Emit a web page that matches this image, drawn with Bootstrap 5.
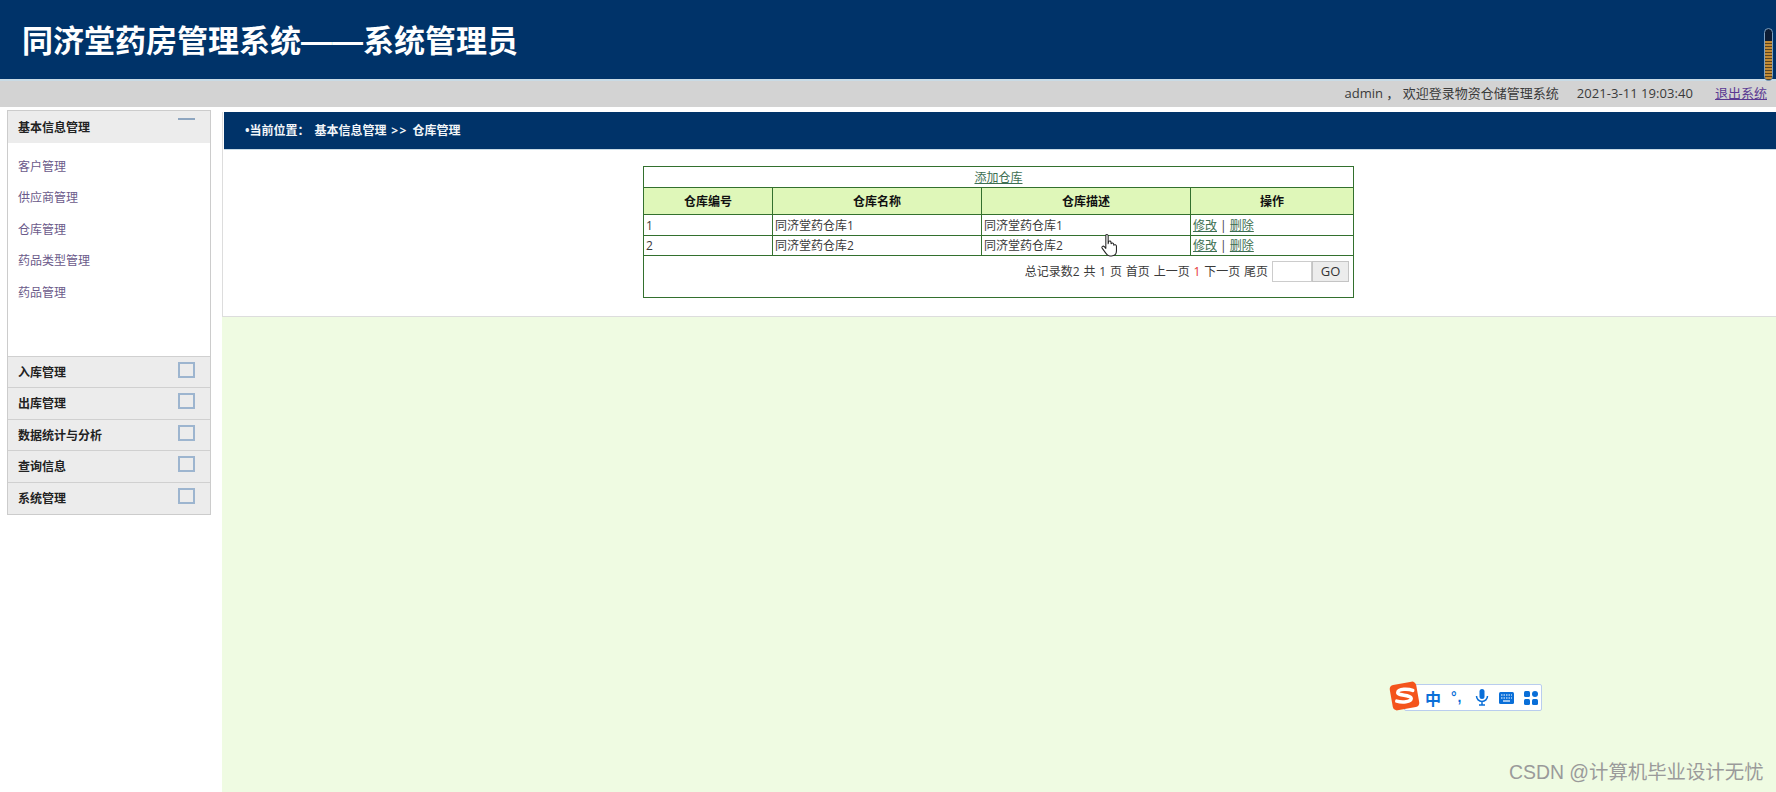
<!DOCTYPE html>
<html lang="zh-CN">
<head>
<meta charset="utf-8">
<title>同济堂药房管理系统</title>
<link href="https://cdn.jsdelivr.net/npm/bootstrap@5.3.0/dist/css/bootstrap.min.css" rel="stylesheet">
<style>
html,body{height:792px;overflow:hidden;background:#fff}
body{font:12px/1.2 "Open Sans","Noto Sans CJK SC",sans-serif;color:#3a3a3a;position:relative}
.top-head{height:81px;background:#003369;border-bottom:2px solid #c9dbe6;padding:25px 0 0 22px}
.top-head h1{margin:0;font:700 31px/34px "Liberation Sans","Noto Sans CJK SC",sans-serif;color:#fff}
.info-bar{height:26px;background:#d3d3d3;font-size:13px;padding-right:9px;gap:18px}
.info-bar a{color:#5b3a92;font-size:13px;margin-left:4px}
.date-txt{letter-spacing:.06px}
.page-body{height:685px}
.side-col{width:222px;padding:3px 0 0 7px;flex:none}
.side-box{width:204px;border:1px solid #ccc}
.side-head{height:31.6px;background:#ececec;padding:0 0 0 10px;font-weight:700;color:#222;font-family:"Noto Sans CJK SC",sans-serif}
.side-head + .side-head,.side-list + .side-head{border-top:1px solid #d0d0d0}
.minus-ico{width:17px;height:2px;background:#8ea6c0;margin:7px 15px 0 0}
.box-ico{width:17px;height:16px;border:2px solid #9db5cf;margin:5px 15px 0 0}
.side-list{height:213px;padding-top:8px;margin:0}
.side-list a{display:block;line-height:31.6px;padding-left:10px;color:#6b5a8a;text-decoration:none}
.main-col{background:#effbe2;min-width:0}
.white-gap{height:5px;background:#fff}
.main-panel{height:205px;background:#fff;border-left:1px solid #ddd;border-bottom:1px solid #ddd;padding-left:1px}
.crumb{height:35px;background:#003369;border-bottom:1px solid #c9dbe6;color:#f2f5f8;font-weight:700;padding:2px 0 0 21px;gap:5px;box-sizing:content-box}
.crumb-sep{letter-spacing:1.5px}
.crumb-wrap{padding:16px 3px 0 0}
.stock-table{width:710px;margin:0 auto;table-layout:fixed;border-collapse:collapse;border:1px solid #33702e;font-size:12px;line-height:16px}
.stock-table td,.stock-table th{border:1px solid #33702e;padding:2px 2px 0;color:#3a3a3a;font-weight:400}
.stock-table th{background:#dff7b9;font-weight:700;text-align:center;color:#111;height:27px;padding:0 2px;font-family:"Noto Sans CJK SC",sans-serif}
.stock-table a{color:#3d6f52}
.row-line td{height:20.5px}
.add-line td{height:21px;text-align:center}
.stock-table .pager-line td{height:42px;vertical-align:top;padding:5px 4px 0 0;word-spacing:.7px}
.pager-input{width:40px;height:21px;border:1px solid #ccc;background:#fff;margin-left:4px;display:block}
.pager-go{width:37px;height:21px;border:1px solid #c4c4c4;background:#ececec;color:#333;font-size:13px;padding:0;line-height:19px;margin:0}
.stock-table .red-num{color:#e53935}
.grip{position:absolute;left:1764px;top:28px;width:9px;height:53px;border:1px solid #7d9fbf;border-radius:5px;background:#0d1c33;overflow:hidden}
.grip i{display:block;margin-top:12px;height:40px;background:repeating-linear-gradient(#c08a35 0 2px,#5b4420 2px 3px)}
.ime-bar{position:absolute;left:1404px;top:684px;width:138px;height:27px;background:#fff;border:1px solid #b9cdee;border-radius:2px;padding-left:20px;gap:10px;color:#0a6fd8}
.ime-zh{font:700 16px/1 "Noto Sans CJK SC",sans-serif}
.ime-pt{font:700 14px/1 "Liberation Sans",sans-serif;width:14px;letter-spacing:1px;margin-top:-2px}
.ime-logo{position:absolute;left:1388px;top:680px}
.mark-text{position:absolute;left:1509px;top:759px;font:19.4px/26px "Liberation Sans","Noto Sans CJK SC",sans-serif;color:#9a9a9a;white-space:nowrap}
.hand{position:absolute;left:1100px;top:233px}
</style>
</head>
<body>
<header class="top-head"><h1>同济堂药房管理系统——系统管理员</h1></header>
<div class="info-bar d-flex align-items-center justify-content-end">
  <span>admin ， 欢迎登录物资仓储管理系统</span><span class="date-txt">2021-3-11 19:03:40</span><a href="#">退出系统</a>
</div>
<div class="page-body d-flex">
  <aside class="side-col">
    <div class="side-box">
      <div class="side-head d-flex justify-content-between align-items-center"><span>基本信息管理</span><i class="minus-ico align-self-start"></i></div>
      <nav class="side-list">
        <a href="#">客户管理</a><a href="#">供应商管理</a><a href="#">仓库管理</a><a href="#">药品类型管理</a><a href="#">药品管理</a>
      </nav>
      <div class="side-head d-flex justify-content-between align-items-center"><span>入库管理</span><i class="box-ico align-self-start"></i></div>
      <div class="side-head d-flex justify-content-between align-items-center"><span>出库管理</span><i class="box-ico align-self-start"></i></div>
      <div class="side-head d-flex justify-content-between align-items-center"><span>数据统计与分析</span><i class="box-ico align-self-start"></i></div>
      <div class="side-head d-flex justify-content-between align-items-center"><span>查询信息</span><i class="box-ico align-self-start"></i></div>
      <div class="side-head d-flex justify-content-between align-items-center"><span>系统管理</span><i class="box-ico align-self-start"></i></div>
    </div>
  </aside>
  <main class="main-col flex-grow-1">
    <div class="white-gap"></div>
    <div class="main-panel">
      <div class="crumb d-flex align-items-center"><span>•当前位置：</span><span>基本信息管理<span class="crumb-sep"> &gt;&gt; </span>仓库管理</span></div>
      <div class="crumb-wrap">
        <table class="stock-table">
          <colgroup><col style="width:129px"><col style="width:209px"><col style="width:209px"><col style="width:163px"></colgroup>
          <tr class="add-line"><td colspan="4"><a href="#">添加仓库</a></td></tr>
          <tr><th>仓库编号</th><th>仓库名称</th><th>仓库描述</th><th>操作</th></tr>
          <tr class="row-line"><td>1</td><td>同济堂药仓库1</td><td>同济堂药仓库1</td><td><a href="#">修改</a> | <a href="#">删除</a></td></tr>
          <tr class="row-line"><td>2</td><td>同济堂药仓库2</td><td>同济堂药仓库2</td><td><a href="#">修改</a> | <a href="#">删除</a></td></tr>
          <tr class="pager-line"><td colspan="4">
            <div class="d-flex justify-content-end align-items-center">
              <span>总记录数2 共 1 页 首页 上一页 <span class="red-num">1</span> 下一页 尾页</span>
              <input class="pager-input" type="text" aria-label="页码"><button class="pager-go" type="button">GO</button>
            </div>
          </td></tr>
        </table>
      </div>
    </div>
  </main>
</div>

<div class="grip"><i></i></div>

<svg class="hand" width="21" height="26" viewBox="0 0 18 22" aria-hidden="true"><path d="M5 1.500c1-.8 2-.2 2 1V9l.4-2c.9-.6 1.900-.3 2 .7l.1 1.300c.6-1 2-.8 2.200.3l.1 1c.8-.8 2.200-.4 2.300.8v4c0 2.500-1.500 4.400-4.200 4.400H8.500c-1.700 0-2.600-.8-3.400-2.200L1.800 12.800c-.6-1.200.8-2.300 1.900-1.300L5 13z" fill="#fff" stroke="#222" stroke-width=".9" stroke-linejoin="round"/></svg>

<div class="ime-bar d-flex align-items-center">
  <span class="ime-zh">中</span>
  <span class="ime-pt">°,</span>
  <svg width="14" height="17" viewBox="0 0 14 17" aria-hidden="true"><rect x="4.500" y="0" width="5" height="10" rx="2.500" fill="#0a6fd8"/><path d="M1.500 7a5.500 5.500 0 0 0 11 0M7 12.500V16M4 16h6" fill="none" stroke="#0a6fd8" stroke-width="1.500"/></svg>
  <svg width="15" height="12" viewBox="0 0 15 12" aria-hidden="true"><rect width="15" height="12" rx="1.500" fill="#0a6fd8"/><path d="M2 3h11M2 6h11" stroke="#fff" stroke-width="1.200" stroke-dasharray="1.500 1"/><path d="M4 9h7" stroke="#fff" stroke-width="1.200"/></svg>
  <svg width="14" height="14" viewBox="0 0 14 14" aria-hidden="true"><rect x="0" y="0" width="6" height="6" rx="1.500" fill="#0a6fd8"/><rect x="8" y="0" width="6" height="6" rx="3" fill="#0a6fd8"/><rect x="0" y="8" width="6" height="6" rx="1.500" fill="#0a6fd8"/><rect x="8" y="8" width="6" height="6" rx="1.500" fill="#0a6fd8"/></svg>
</div>
<svg class="ime-logo" width="33" height="32" viewBox="0 0 32 31" aria-hidden="true"><rect x="3" y="3" width="26" height="25" rx="4" fill="#f4541c" transform="rotate(-10 16 15.500)"/><path d="M24 10C20 8.500 10 8 9.500 12c-.4 3.500 13 2 13 6 0 3.500-9 4-14 2.500" fill="none" stroke="#fff" stroke-width="3.400" stroke-linecap="round"/></svg>
<div class="mark-text">CSDN @计算机毕业设计无忧</div>
</body>
</html>
